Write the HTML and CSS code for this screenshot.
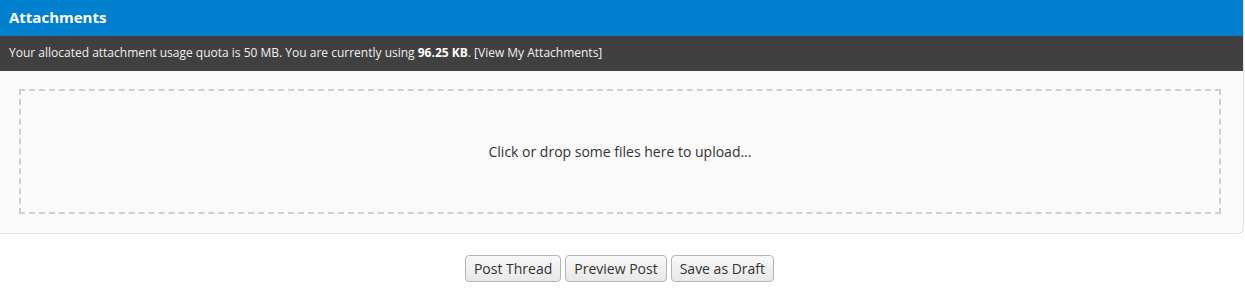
FILE: index.html
```html
<!DOCTYPE html>
<html>
<head>
<meta charset="utf-8">
<link rel="stylesheet" href="styles.css">
</head>
<body>
<div class="panel">
  <div class="panel-head">Attachments</div>
  <div class="panel-sub">Your allocated attachment usage quota is 50 MB. You are currently using <strong>96.25 KB</strong>. <a class="link" href="#">[View My Attachments]</a></div>
  <div class="panel-body">
    <div class="dropzone">Click or drop some files here to upload...</div>
  </div>
</div>
<div class="actions">
  <button class="btn">Post Thread</button>
  <button class="btn">Preview Post</button>
  <button class="btn">Save as Draft</button>
</div>
</body>
</html>
```

FILE: styles.css
```css
html, body {
  margin: 0;
  padding: 0;
  background: #fff;
  font-family: "Open Sans", "DejaVu Sans", sans-serif;
}
.panel {
  width: 1243px;
  border-right: 1px solid #e2e2e2;
  border-bottom: 1px solid #e2e2e2;
  border-bottom-right-radius: 6px;
  background: #fafafa;
}
.panel-head {
  background: #0280d0;
  color: #fff;
  font-weight: 700;
  font-size: 15px;
  height: 36px;
  line-height: 35px;
  padding-left: 9px;
}
.panel-sub {
  background: #404040;
  color: #f0f0f0;
  font-size: 12px;
  height: 35px;
  line-height: 34px;
  padding-left: 9px;
}
.panel-sub strong {
  color: #fff;
}
.link {
  color: #f0f0f0;
  text-decoration: none;
}
.panel-body {
  padding: 18px 22px 19px 19px;
}
.dropzone {
  border: 2px dashed #cfcfcf;
  height: 121px;
  display: flex;
  align-items: center;
  justify-content: center;
  font-size: 14px;
  color: #333;
}
.actions {
  display: flex;
  justify-content: center;
  gap: 4px;
  padding-top: 21px;
  padding-right: 6px;
}
.btn {
  font-family: "Open Sans", "DejaVu Sans", sans-serif;
  font-size: 14px;
  color: #333;
  height: 27px;
  padding: 0 8px;
  border: 1px solid #b5b5b5;
  border-radius: 4px;
  background: linear-gradient(#f8f8f8, #e8e8e8);
  line-height: 25px;
}
```
